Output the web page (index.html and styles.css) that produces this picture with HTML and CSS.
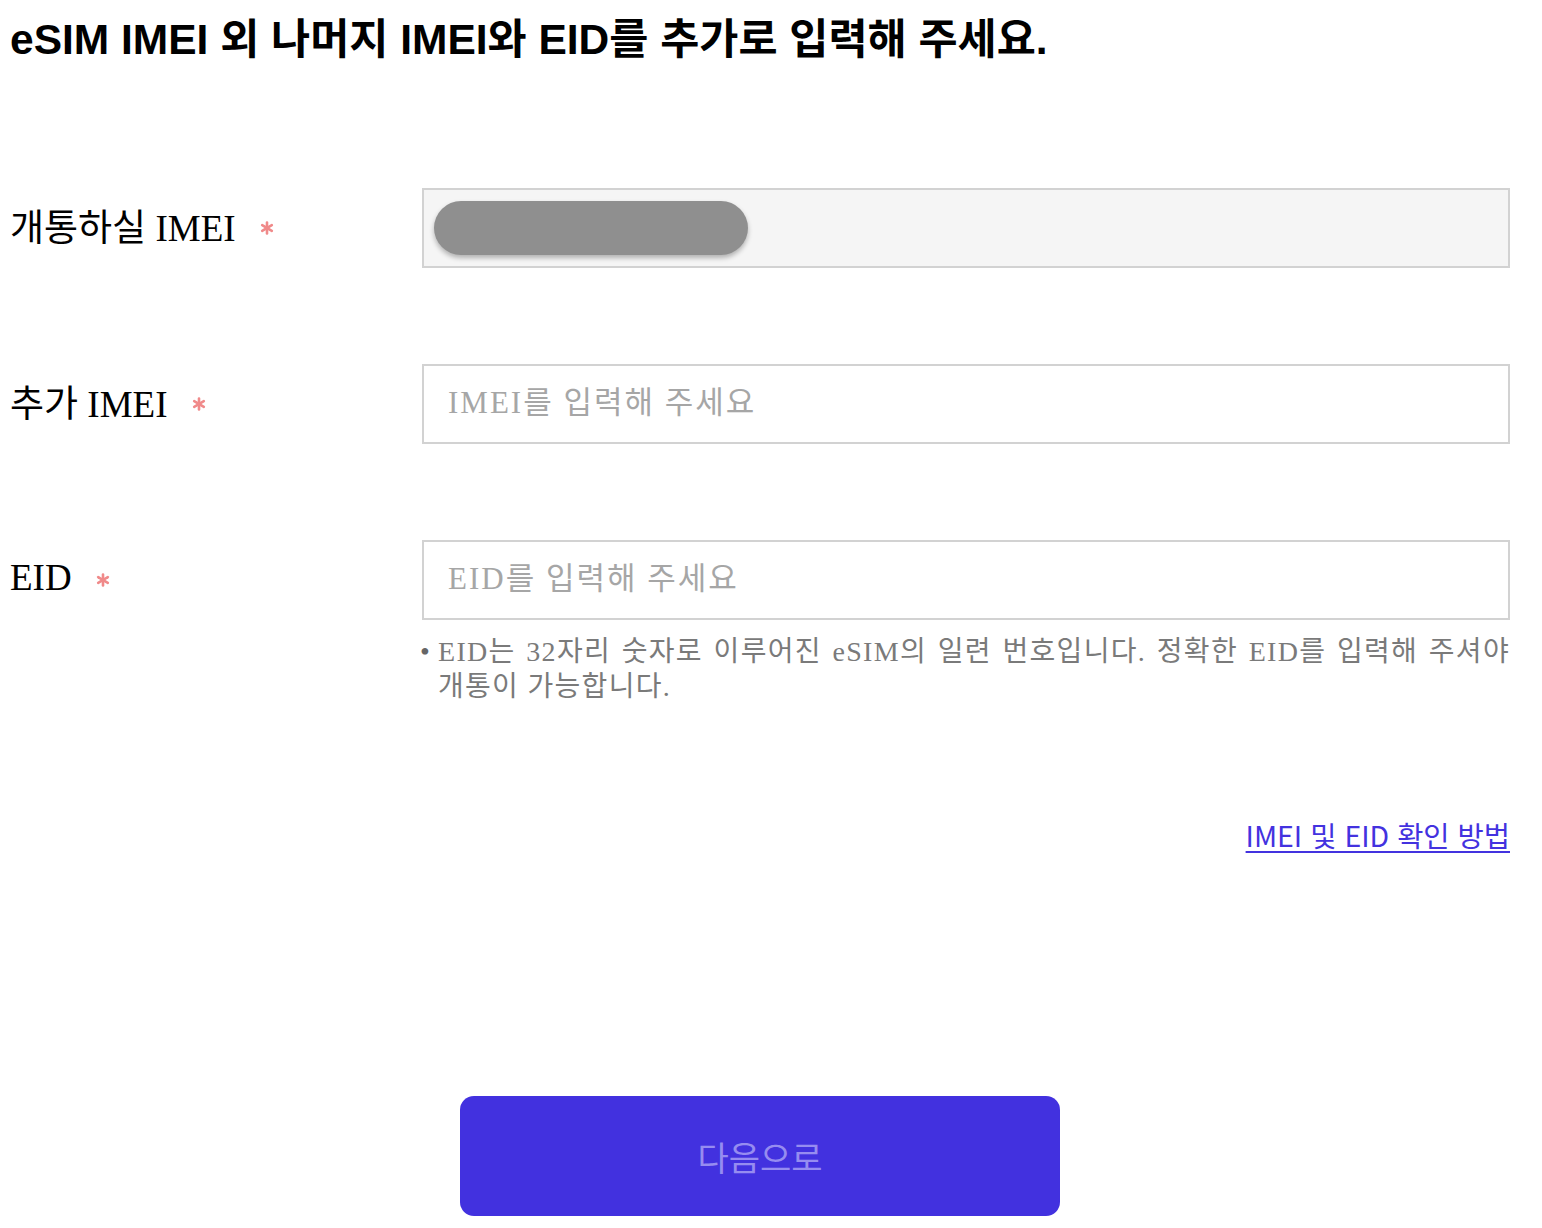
FILE: index.html
```html
<!DOCTYPE html>
<html lang="ko">
<head>
<meta charset="utf-8">
<title>eSIM IMEI / EID</title>
<link rel="stylesheet" href="styles.css">
</head>
<body>
<div class="page">
  <h1 class="title">eSIM IMEI 외 나머지 IMEI와 EID를 추가로 입력해 주세요.</h1>

  <div class="form">
    <div class="row">
      <label class="label">개통하실 IMEI <span class="req"><svg viewBox="0 0 14 14" width="14" height="14"><g stroke="#f08a8a" stroke-width="2.6" stroke-linecap="round"><line x1="7" y1="1.5" x2="7" y2="12.5"/><line x1="2.2" y1="4.2" x2="11.8" y2="9.8"/><line x1="2.2" y1="9.8" x2="11.8" y2="4.2"/></g></svg></span></label>
      <div class="field filled"><span class="mask"></span></div>
    </div>

    <div class="row">
      <label class="label">추가 IMEI <span class="req"><svg viewBox="0 0 14 14" width="14" height="14"><g stroke="#f08a8a" stroke-width="2.6" stroke-linecap="round"><line x1="7" y1="1.5" x2="7" y2="12.5"/><line x1="2.2" y1="4.2" x2="11.8" y2="9.8"/><line x1="2.2" y1="9.8" x2="11.8" y2="4.2"/></g></svg></span></label>
      <div class="field"><span class="placeholder">IMEI를 입력해 주세요</span></div>
    </div>

    <div class="row">
      <label class="label">EID <span class="req"><svg viewBox="0 0 14 14" width="14" height="14"><g stroke="#f08a8a" stroke-width="2.6" stroke-linecap="round"><line x1="7" y1="1.5" x2="7" y2="12.5"/><line x1="2.2" y1="4.2" x2="11.8" y2="9.8"/><line x1="2.2" y1="9.8" x2="11.8" y2="4.2"/></g></svg></span></label>
      <div class="field-wrap">
        <div class="field"><span class="placeholder">EID를 입력해 주세요</span></div>
        <p class="help"><span class="bullet">•</span><span class="help-text">EID는 32자리 숫자로 이루어진 eSIM의 일련 번호입니다. 정확한 EID를 입력해 주셔야 개통이 가능합니다.</span></p>
      </div>
    </div>
  </div>

  <div class="link-row"><a class="guide" href="#">IMEI 및 EID 확인 방법</a></div>

  <div class="actions"><button class="next" type="button">다음으로</button></div>
</div>
</body>
</html>
```
FILE: styles.css
```css
html, body {
  margin: 0;
  padding: 0;
  background: #ffffff;
}

.page {
  width: 1500px;
  padding: 0 0 0 10px;
}

.title {
  margin: 0;
  padding-top: 16px;
  font-family: "Liberation Sans", "Noto Sans CJK KR", sans-serif;
  font-weight: 700;
  font-size: 42.5px;
  line-height: 48px;
  color: #000;
}

.form {
  margin-top: 124px;
  display: flex;
  flex-direction: column;
  gap: 96px;
}

.row {
  display: grid;
  grid-template-columns: 412px 1fr;
  align-items: start;
}

.label {
  box-sizing: border-box;
  height: 80px;
  padding-bottom: 6px;
  display: flex;
  align-items: center;
  gap: 15px;
  font-family: "Liberation Serif", "Noto Sans CJK KR", serif;
  font-size: 37px;
  color: #000;
  white-space: pre;
}

.req {
  display: inline-flex;
  align-items: center;
  padding-top: 6px;
}

.field {
  box-sizing: border-box;
  height: 80px;
  border: 2px solid #d2d2d2;
  background: #fff;
  display: flex;
  align-items: center;
  padding-left: 24px;
}

.field.filled {
  background: #f5f5f5;
  padding-left: 10px;
}

.mask {
  display: block;
  width: 314px;
  height: 54px;
  border-radius: 27px;
  background: #8f8f8f;
  box-shadow: 0 3px 5px rgba(0, 0, 0, 0.28);
}

.placeholder {
  font-family: "Liberation Serif", "Noto Sans CJK KR", serif;
  font-size: 31px;
  color: #a6a6a6;
  letter-spacing: 2px;
  padding-bottom: 9px;
}

.help {
  margin: 14px 0 0 -2px;
  display: flex;
  font-family: "Liberation Serif", "Noto Sans CJK KR", serif;
  font-size: 28px;
  line-height: 35px;
  color: #7a7a7a;
}

.bullet {
  flex: 0 0 18px;
  color: #666;
}

.help-text {
  text-align: justify;
  letter-spacing: 1.3px;
  flex: 1;
}

.link-row {
  margin-top: 112px;
  display: flex;
  justify-content: flex-end;
}

.guide {
  font-family: "Noto Sans CJK KR", "Noto Sans", sans-serif;
  font-size: 28.5px;
  line-height: 38px;
  color: #4332df;
  text-decoration: underline;
  text-underline-offset: 4px;
  text-decoration-thickness: 2px;
}

.actions {
  margin-top: 242px;
  display: flex;
  justify-content: center;
}

.next {
  width: 600px;
  height: 120px;
  border: none;
  border-radius: 14px;
  background: #4231df;
  color: #968cf0;
  font-family: "Noto Sans CJK KR", "Noto Sans", sans-serif;
  font-size: 34px;
  font-weight: 400;
  cursor: pointer;
}
```
